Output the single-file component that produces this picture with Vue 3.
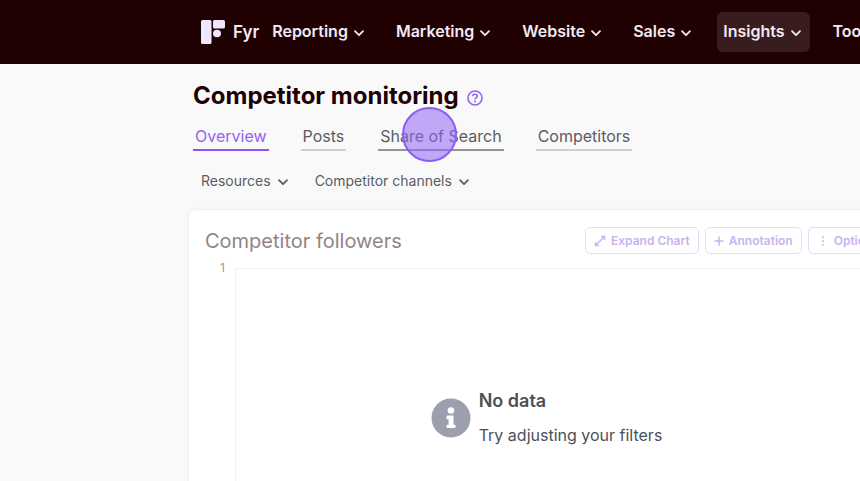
<script setup>
import { ref } from 'vue'

const menus = ['Reporting', 'Marketing', 'Website', 'Sales', 'Insights', 'Tools']
const activeMenu = ref('Insights')
const tabs = ['Overview', 'Posts', 'Share of Search', 'Competitors']
const activeTab = ref('Overview')
const filters = ['Resources', 'Competitor channels']
</script>

<template>
  <div class="page">
    <header class="topbar">
      <a class="brand" href="#">
        <svg class="logo" viewBox="0 0 24 24" aria-hidden="true">
          <rect x="0" y="0" width="10.500" height="24" rx="1.500" />
          <rect x="12" y="0" width="12" height="8.500" rx="1.500" />
          <ellipse cx="16" cy="13.500" rx="4" ry="3.800" />
        </svg>
        <span>Fyr</span>
      </a>
      <nav class="menu">
        <button
          v-for="item in menus"
          :key="item"
          type="button"
          class="menu-item"
          :class="{ active: item === activeMenu }"
          @click="activeMenu = item"
        >
          {{ item }}
          <svg class="caret" viewBox="0 0 12 12" aria-hidden="true"><path d="M2 4.200 6 8.200 10 4.200" /></svg>
        </button>
      </nav>
    </header>

    <main class="content">
      <div class="heading">
        <h1>Competitor monitoring</h1>
        <button type="button" class="help" aria-label="Help">
          <svg viewBox="0 0 16 16" aria-hidden="true">
            <circle cx="8" cy="8" r="7" />
            <path d="M5.800 6.300C5.800 5 6.700 4.300 8 4.300s2.300.8 2.300 1.900C10.300 7.600 8 7.700 8 9.400" />
            <circle class="dot" cx="8" cy="11.500" r="1" />
          </svg>
        </button>
      </div>

      <nav class="tabs">
        <a
          v-for="tab in tabs"
          :key="tab"
          href="#"
          class="tab"
          :class="{ active: tab === activeTab, hovered: tab === 'Share of Search' }"
          @click.prevent="activeTab = tab"
        >{{ tab }}<span v-if="tab === 'Share of Search'" class="pointer"></span></a>
      </nav>

      <div class="filters">
        <button v-for="filter in filters" :key="filter" type="button" class="filter">
          {{ filter }}
          <svg class="caret" viewBox="0 0 12 12" aria-hidden="true"><path d="M2 4.200 6 8.200 10 4.200" /></svg>
        </button>
      </div>

      <section class="card">
        <div class="card-head">
          <h2>Competitor followers</h2>
          <div class="actions">
            <button type="button">
              <svg viewBox="0 0 12 12" aria-hidden="true">
                <path d="M2 10 10 2M7.300 1.500h3.200v3.200M1.500 7.300v3.200h3.200" />
              </svg>
              Expand Chart
            </button>
            <button type="button">
              <svg class="plus" viewBox="0 0 10 12" aria-hidden="true"><path d="M5 1.500v9M.5 6h9" /></svg>
              Annotation
            </button>
            <button type="button">
              <svg viewBox="0 0 12 12" aria-hidden="true">
                <path d="M6 1.200v2M6 5v2M6 8.800v2" />
              </svg>
              Options
            </button>
          </div>
        </div>
        <div class="chart">
          <span class="axis">1</span>
          <div class="plot"></div>
          <div class="empty">
            <svg viewBox="0 0 40 40" aria-hidden="true">
              <circle class="disc" cx="20" cy="20" r="19.500" />
              <circle class="mark" cx="20" cy="12.500" r="3.300" />
              <path class="mark" d="M16.300 17.500h6.200v9.200h1.300q.8 0 .8.800v1.800q0 .8-.8.800h-7.500q-.8 0-.8-.8v-1.800q0-.8.800-.8h1.300v-5.500h-1.300q-.8 0-.8-.8v-2q0-.9.800-.9z" />
            </svg>
            <div>
              <h3>No data</h3>
              <p>Try adjusting your filters</p>
            </div>
          </div>
        </div>
      </section>
    </main>
  </div>
</template>

<style>
body {
  background: #f9f9f9;
}
</style>

<style scoped>
.page {
  height: 100vh;
  overflow: hidden;
  display: flex;
  flex-direction: column;
  font-family: Inter, "Liberation Sans", sans-serif;
  color: #5b5c62;
}
h1, h2, h3, p {
  margin: 0;
}
button {
  font: inherit;
  color: inherit;
  background: none;
  border: 0;
  padding: 0;
  white-space: nowrap;
}
a {
  color: inherit;
  text-decoration: none;
}
svg {
  flex: none;
  fill: none;
}
.topbar {
  flex: none;
  display: flex;
  align-items: center;
  gap: 7px;
  height: 64px;
  box-sizing: border-box;
  padding-left: 201px;
  background: #200102;
  color: #f1e9f3;
}
.brand {
  display: flex;
  align-items: center;
  gap: 8px;
  font-size: 17px;
  font-weight: 600;
}
.logo {
  width: 24px;
  height: 24px;
  fill: #f1e6ff;
}
.menu {
  display: flex;
  gap: 17px;
}
.menu-item {
  display: flex;
  align-items: center;
  gap: 5px;
  height: 40px;
  padding: 0 8px 2px 6px;
  border-radius: 6px;
  font-size: 16px;
  font-weight: 600;
}
.menu-item.active {
  background: #381c1e;
}
.caret {
  width: 12px;
  height: 12px;
  margin-top: 3px;
  stroke: currentColor;
  stroke-width: 1.8;
  stroke-linecap: round;
  stroke-linejoin: round;
}
.content {
  flex: 1;
  display: flex;
  flex-direction: column;
  margin: 0 -44px 0 189px;
}
.heading {
  display: flex;
  align-items: center;
  gap: 8px;
  padding: 16px 4px 0;
}
h1 {
  font-size: 24px;
  line-height: 32px;
  font-weight: 700;
  color: #200102;
}
.help {
  height: 16px;
  margin-top: 4px;
}
.help svg {
  width: 16px;
  height: 16px;
  display: block;
  stroke: #9563ee;
  stroke-width: 1.6;
}
.help .dot {
  fill: #9563ee;
  stroke: none;
}
.tabs {
  display: flex;
  gap: 32px;
  padding: 12px 4px 0;
}
.tab {
  position: relative;
  padding: 0 2px;
  border-bottom: 2px solid #cfcfd4;
  font-size: 16px;
  line-height: 25px;
}
.tab.hovered {
  border-color: #92939c;
}
.tab.active {
  color: #9563ee;
  border-color: #8a55f0;
}
.pointer {
  position: absolute;
  left: 24px;
  top: -17px;
  width: 55px;
  height: 55px;
  box-sizing: border-box;
  border: 2px solid #8b5cf6;
  border-radius: 50%;
  background: rgba(147, 100, 245, 0.55);
}
.filters {
  display: flex;
  gap: 26px;
  padding: 20px 12px 0;
}
.filter {
  display: flex;
  align-items: center;
  gap: 6px;
  font-size: 14px;
  line-height: 20px;
}
.filter .caret {
  margin-top: 2px;
}
.card {
  flex: 1;
  margin-top: 19px;
  padding: 17px 16px 0;
  border-radius: 6px 6px 0 0;
  background: #fff;
  box-shadow: 0 0 3px rgba(0, 0, 0, 0.1);
  display: flex;
  flex-direction: column;
}
.card-head {
  display: flex;
  align-items: center;
  justify-content: space-between;
}
h2 {
  font-size: 20px;
  line-height: 26px;
  font-weight: 400;
  color: #918587;
}
.actions {
  display: flex;
  gap: 6px;
}
.actions button {
  display: flex;
  align-items: center;
  gap: 5px;
  height: 27px;
  padding: 0 8px;
  border: 1px solid #e6dcf8;
  border-radius: 5px;
  font-size: 12px;
  font-weight: 600;
  color: #c6b3ef;
}
.actions svg {
  width: 12px;
  height: 12px;
  stroke: currentColor;
  stroke-width: 1.5;
}
.actions .plus {
  width: 10px;
}
.chart {
  flex: 1;
  display: grid;
  grid-template-columns: 20px 1fr;
  column-gap: 4px;
  padding-top: 6px;
}
.axis {
  grid-area: 1 / 1;
  font-size: 12px;
  line-height: 16px;
  text-align: right;
  color: #a09b9d;
}
.plot {
  grid-area: 1 / 2;
  margin: 8px 0 0 6px;
  border-top: 1px solid #f0f0f1;
  border-left: 1px solid #f0f0f1;
}
.empty {
  grid-area: 1 / 1 / 2 / 3;
  align-self: start;
  justify-self: center;
  display: flex;
  align-items: center;
  gap: 8px;
  padding-top: 129px;
}
.empty svg {
  width: 40px;
  height: 40px;
}
.disc {
  fill: #9ca0ae;
}
.mark {
  fill: #fff;
}
h3 {
  font-size: 18px;
  line-height: 24px;
  font-weight: 600;
  color: #4b5058;
}
p {
  margin-top: 10px;
  font-size: 16px;
  line-height: 24px;
  color: #4b5058;
}
</style>
